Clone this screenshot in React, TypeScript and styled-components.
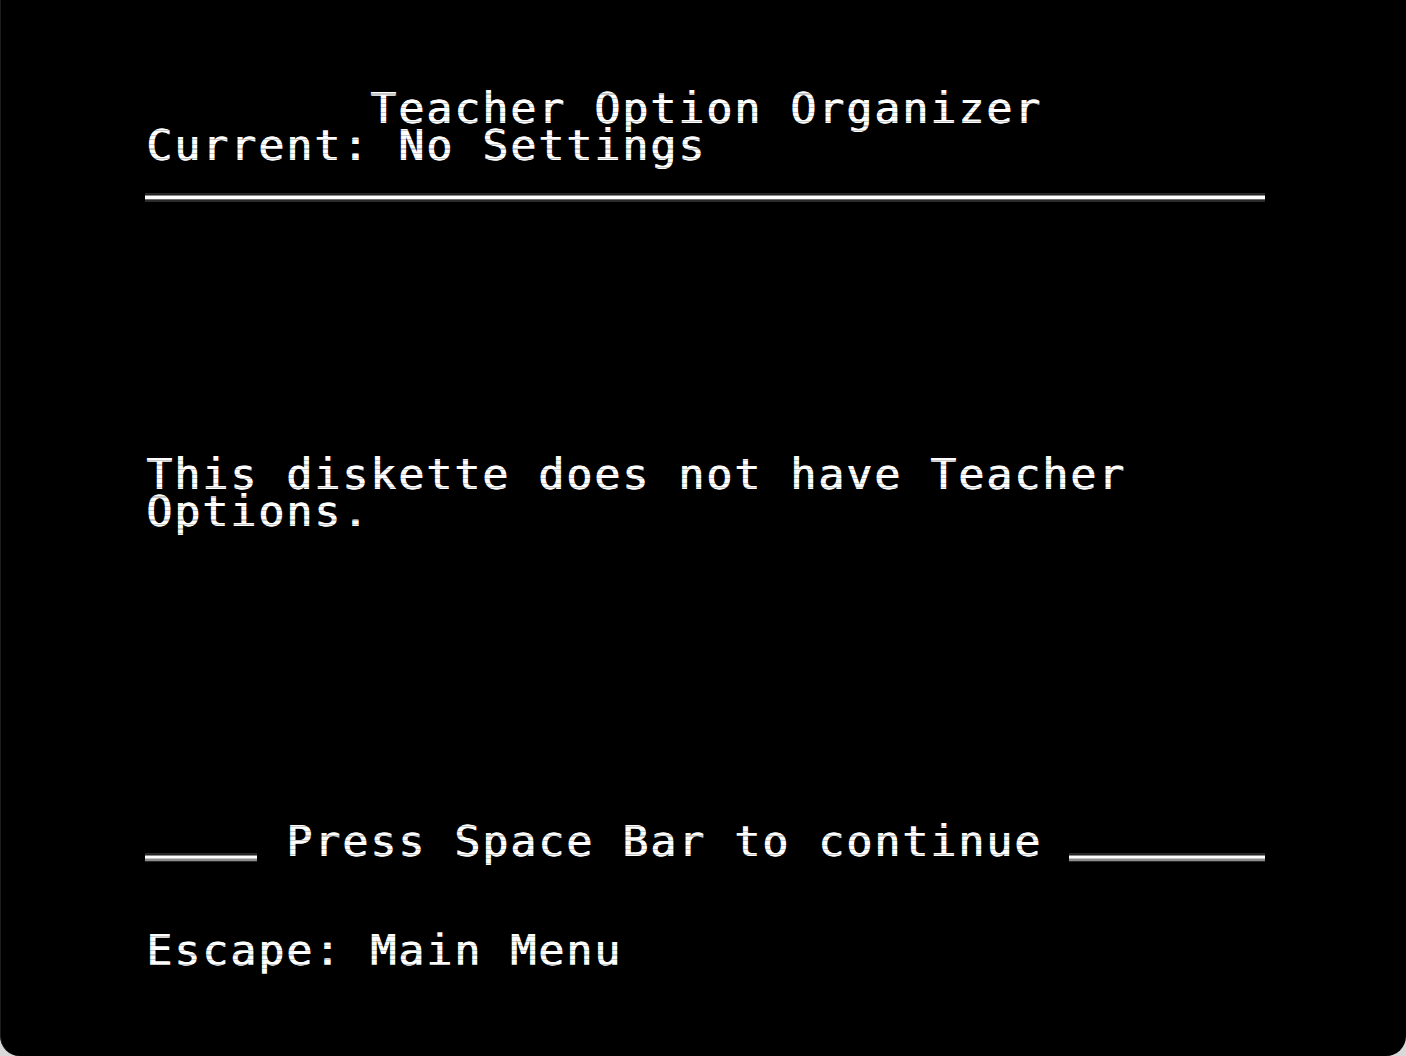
import React from "react";
import styled, { createGlobalStyle } from "styled-components";

const CELL_W = 28;
const ROW_H = 36.63;
const FONT_SIZE = 43;

const GlobalStyle = createGlobalStyle`
html, body {
	margin: 0;
	padding: 0;
	background: #d9d9d9;
}
`;

type Part = string | { rule: number };

// 24 rows of the 40 column text screen
const screen: Part[][] = [
	["        Teacher Option Organizer"],
	["Current: No Settings"],
	[{ rule: 40 }],
	[], [], [], [], [], [], [],
	["This diskette does not have Teacher"],
	["Options."],
	[], [], [], [], [], [], [], [],
	[{ rule: 4 }, " Press Space Bar to continue ", { rule: 7 }],
	[], [],
	["Escape: Main Menu"],
];

const App: React.FC = () => {
	return (
		<>
			<GlobalStyle />
			<Monitor>
				<TextScreen>
					{screen.map((parts, i) => (
						<Line key={i}>
							{parts.map((p, j) =>
								typeof p === "string" ? (
									<React.Fragment key={j}>{p}</React.Fragment>
								) : (
									<Rule key={j} $cols={p.rule} />
								)
							)}
						</Line>
					))}
				</TextScreen>
				<Scanlines />
			</Monitor>
		</>
	);
};
export default App;

const Monitor = styled.div`
position: relative;
width: 1406px;
height: 1056px;
box-sizing: border-box;
padding: 90px 0 0 145px;
background: #000;
border-left: 1px solid #1c1c1c;
border-radius: 0 0 20px 20px;
overflow: hidden;
`;

const TextScreen = styled.div`
font-family: "DejaVu Sans Mono", "Liberation Mono", monospace;
font-size: ${FONT_SIZE}px;
letter-spacing: ${CELL_W - FONT_SIZE * 0.60205}px;
line-height: ${ROW_H}px;
color: #fff;
text-shadow: 0.9px 0 0 #fff;
`;

const Line = styled.div`
height: ${ROW_H}px;
white-space: pre;
`;

const Rule = styled.span<{ $cols: number }>`
display: inline-block;
position: relative;
vertical-align: top;
width: ${(p) => p.$cols * CELL_W}px;
height: ${ROW_H}px;
&::after {
	content: "";
	position: absolute;
	left: -1px;
	right: 1px;
	top: 30px;
	height: 9px;
	background: linear-gradient(
		to bottom,
		#2a2a2a 0 1.5px,
		#8c8c8c 1.5px 3px,
		#fff 3px 6px,
		#8c8c8c 6px 7.5px,
		#2a2a2a 7.5px 9px
	);
}
`;

const Scanlines = styled.div`
position: absolute;
inset: 0;
pointer-events: none;
background-image: repeating-linear-gradient(
	to bottom,
	rgba(0, 0, 0, 0) 0,
	rgba(0, 0, 0, 0) 3.4px,
	rgba(0, 0, 0, 0.22) 3.4px,
	rgba(0, 0, 0, 0.22) 4.58px
);
background-position: 0 90px;
`;
